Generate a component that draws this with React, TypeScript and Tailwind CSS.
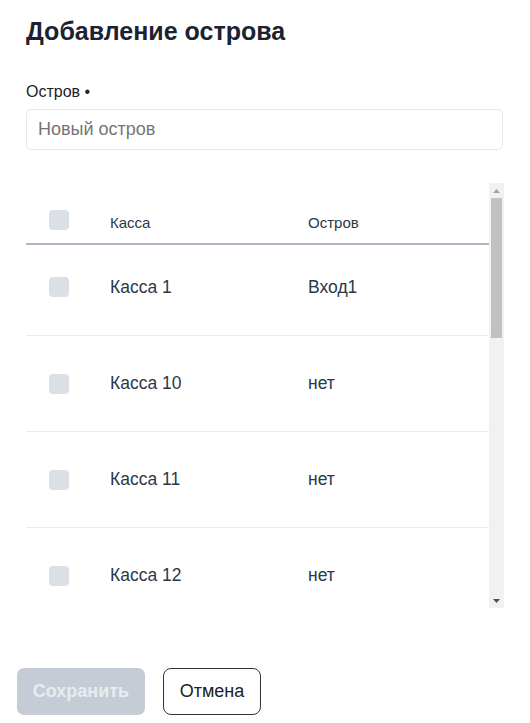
import React from "react";

const rows = [
  { name: "Касса 1", island: "Вход1" },
  { name: "Касса 10", island: "нет" },
  { name: "Касса 11", island: "нет" },
  { name: "Касса 12", island: "нет" },
  { name: "Касса 13", island: "нет" },
  { name: "Касса 14", island: "нет" },
  { name: "Касса 2", island: "нет" },
  { name: "Касса 3", island: "нет" },
  { name: "Касса 4", island: "нет" },
  { name: "Касса 5", island: "нет" },
  { name: "Касса 6", island: "нет" },
  { name: "Касса 7", island: "нет" },
];

function Box() {
  return <div className="w-[20px] h-[20px] rounded-[4px] bg-[#dae0e5] shrink-0" />;
}

export default function App() {
  return (
    <div
      className="w-[530px] h-[723px] bg-white overflow-hidden text-[#2d3748]"
      style={{ fontFamily: '"Liberation Sans", Arial, sans-serif' }}
    >
      <div className="px-[26px] pt-[15px]">
        <h1 className="text-[25px] leading-[32px] font-bold text-[#1c2232]">Добавление острова</h1>
        <div className="mt-[33px] text-[16px] leading-[24px] text-[#222]">Остров •</div>
        <div className="mt-[5px] h-[41px] w-[477px] border border-[#e2e8f0] rounded-[5px] flex items-center pl-[11px] text-[18px] text-[#757575]">
          Новый остров
        </div>
        <div className="mt-[33px] w-[478px] h-[425px] flex">
          <div className="w-[463px] h-full overflow-hidden">
            <div className="h-[62px] border-b-2 border-[#aab6c2] flex items-center pl-[23px] pt-[14px] text-[15px]">
              <Box />
              <div className="ml-[41px] w-[198px] pt-[7px]">Касса</div>
              <div className="pt-[7px]">Остров</div>
            </div>
            {rows.map((r, i) => (
              <div
                key={r.name}
                className={
                  i === 0
                    ? "h-[91px] border-b border-[#ebebeb] flex items-center pl-[23px] pb-[6px] text-[17.5px]"
                    : "h-[96px] border-b border-[#ebebeb] flex items-center pl-[23px] text-[17.5px]"
                }
              >
                <Box />
                <div className="ml-[41px] w-[198px]">{r.name}</div>
                <div>{r.island}</div>
              </div>
            ))}
          </div>
          <div className="w-[15px] h-full bg-[#f1f1f1] flex flex-col">
            <div className="h-[15px] flex items-center justify-center">
              <svg width="7" height="4" viewBox="0 0 7 4">
                <path d="M0 4 L3.5 0 L7 4 Z" fill="#a3a3a3" />
              </svg>
            </div>
            <div className="mx-[2px] h-[140px] bg-[#c1c1c1]" />
            <div className="flex-1" />
            <div className="h-[15px] flex items-center justify-center">
              <svg width="7" height="4" viewBox="0 0 7 4">
                <path d="M0 0 L7 0 L3.5 4 Z" fill="#505050" />
              </svg>
            </div>
          </div>
        </div>
      </div>
      <div className="flex gap-[18px] pl-[17px] mt-[60px]">
        <button className="w-[128px] h-[47px] rounded-[7px] bg-[#c5ccd5] text-[#e8ecf0] text-[18px] font-bold">
          Сохранить
        </button>
        <button className="w-[98px] h-[47px] rounded-[8px] border border-[#333] text-[#222] text-[18px]">
          Отмена
        </button>
      </div>
    </div>
  );
}
